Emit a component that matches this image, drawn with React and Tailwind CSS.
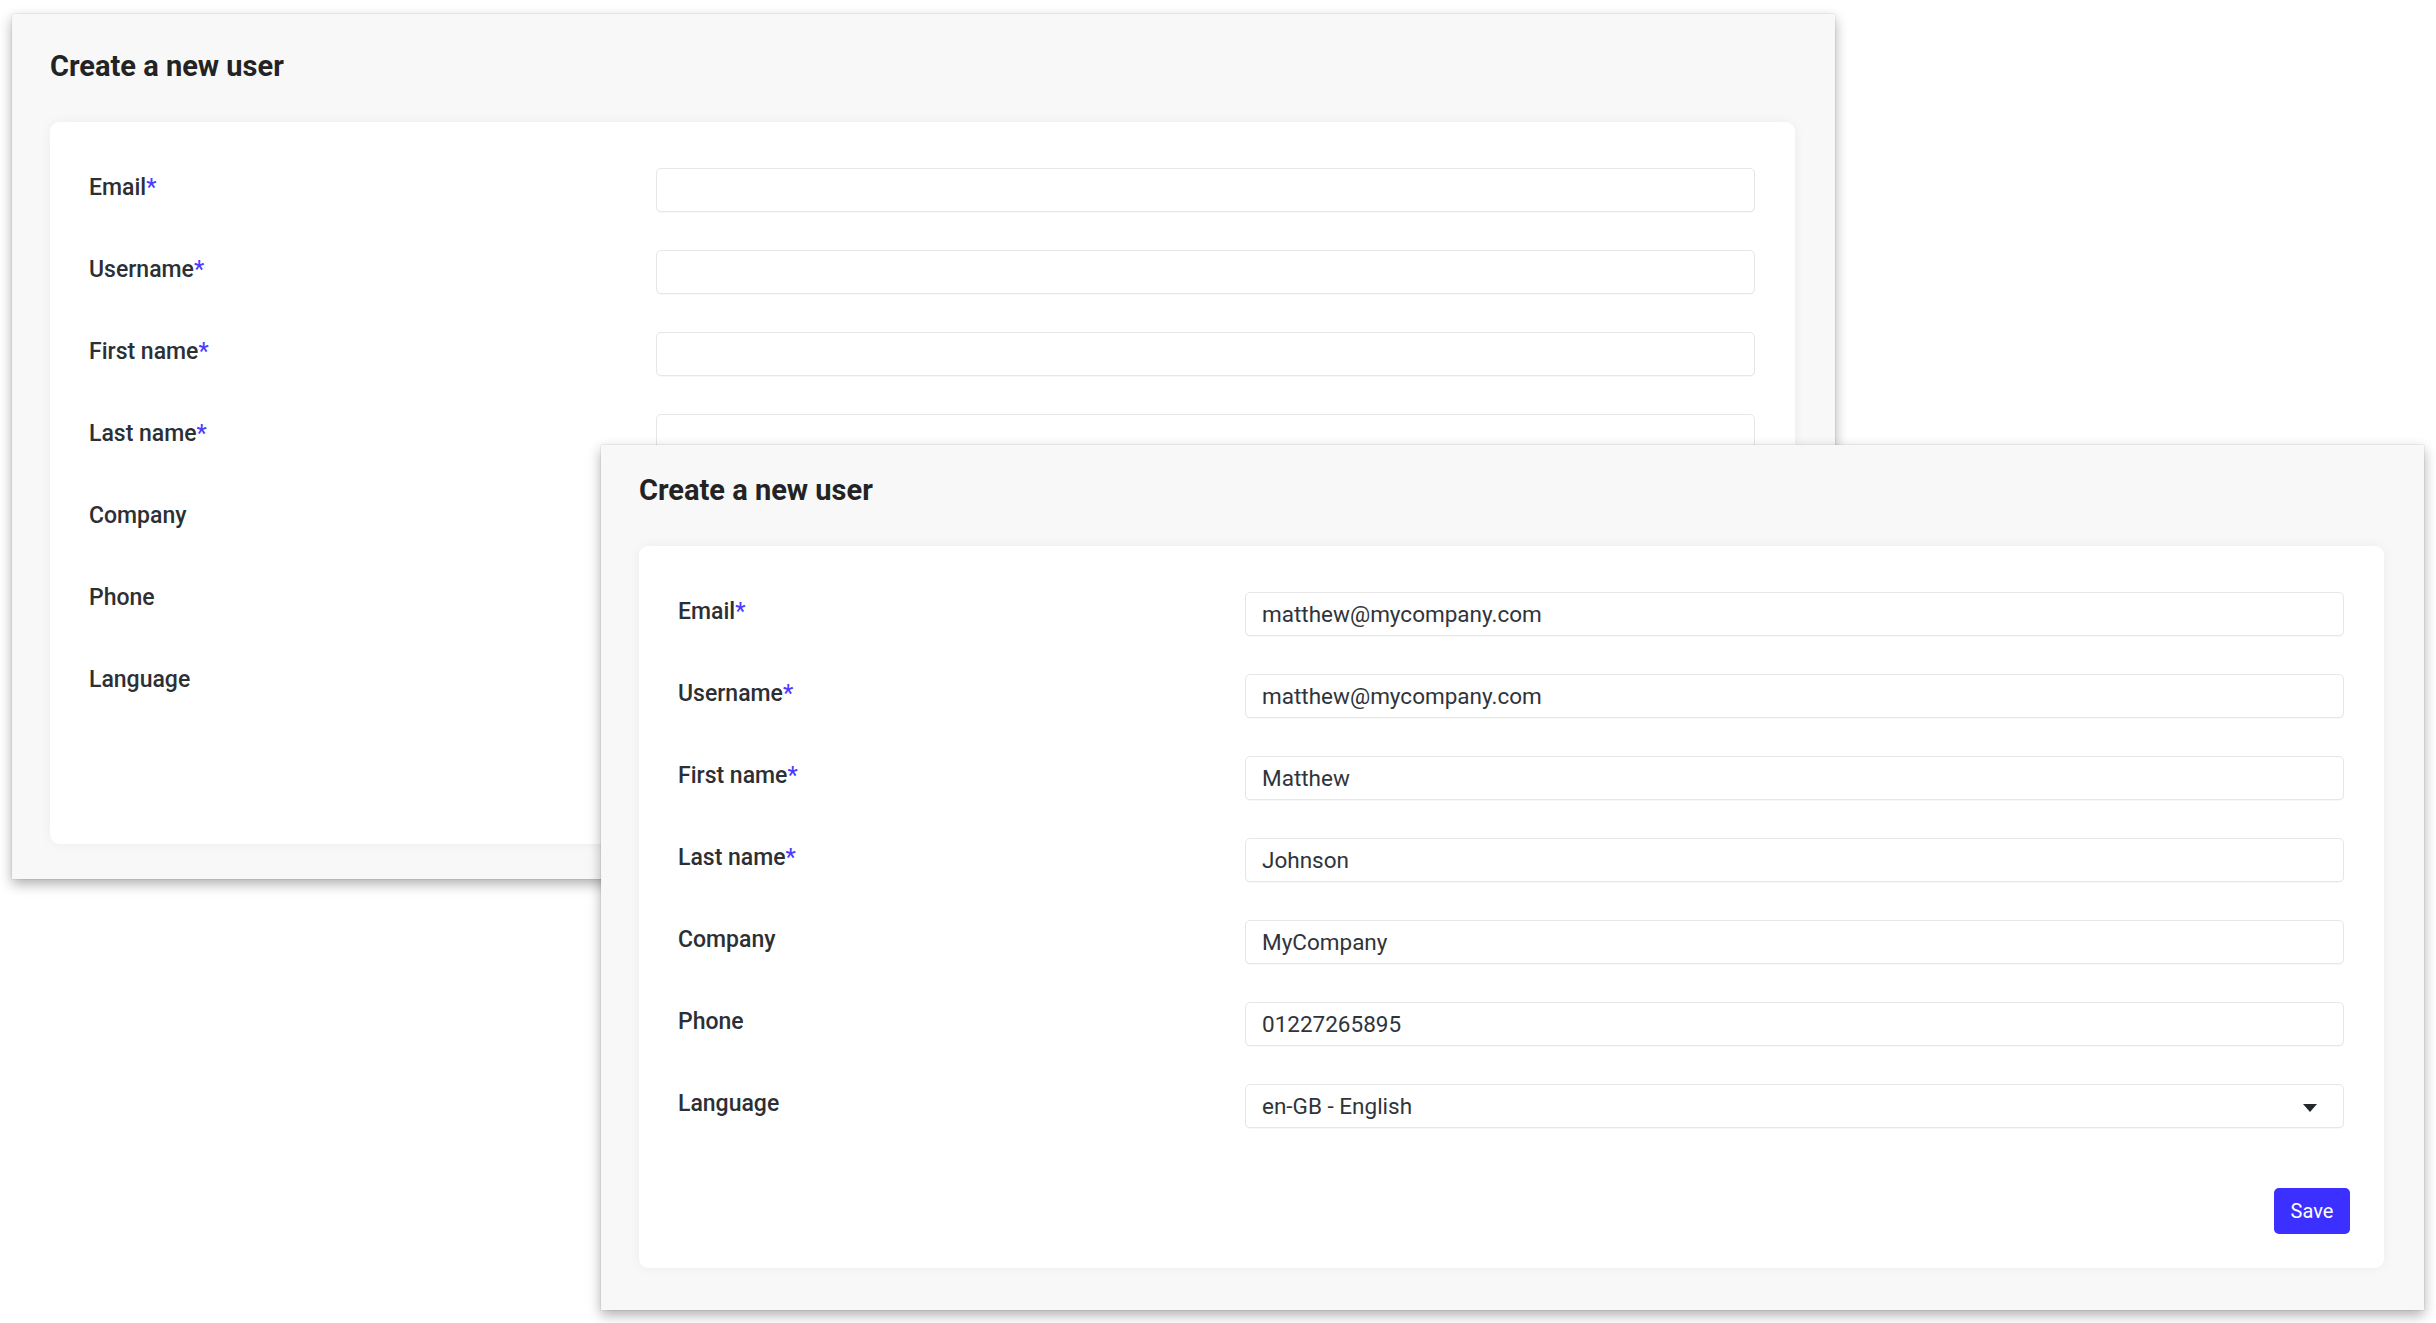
import React from "react";

const fields = [
  { label: "Email", required: true, value: "matthew@mycompany.com" },
  { label: "Username", required: true, value: "matthew@mycompany.com" },
  { label: "First name", required: true, value: "Matthew" },
  { label: "Last name", required: true, value: "Johnson" },
  { label: "Company", required: false, value: "MyCompany" },
  { label: "Phone", required: false, value: "01227265895" },
];

function Row({ label, required, value, select }) {
  return (
    <div className="flex h-[44px] items-center">
      <div className="w-[567px] shrink-0 pb-[4px] text-[23px] leading-[28px] font-medium text-[#2c3035]">
        {label}
        {required && <span className="text-[#4b3cff]">*</span>}
      </div>
      <div className="flex h-[44px] flex-1 items-center justify-between rounded-[5px] border border-[#e6e6e6] bg-white pl-[16px] pr-[26px] shadow-[0_1px_1px_rgba(0,0,0,0.03)]">
        <span className="text-[22.5px] leading-[28px] text-[#30343a]">{value}</span>
        {select && (
          <svg width="14" height="8" viewBox="0 0 14 8" className="mt-[3px]">
            <path d="M0 0 L14 0 L7 8 Z" fill="#23262b" />
          </svg>
        )}
      </div>
    </div>
  );
}

function Window({ filled, back }) {
  return (
    <div
      className={
        "flex h-[865px] w-[1823px] flex-col bg-[#f8f8f8] pl-[38px] pr-[40px] shadow-[0_5px_12px_rgba(0,0,0,0.32),0_0_1px_rgba(0,0,0,0.25)] " +
        (back ? "pt-[35px]" : "pt-[28px]")
      }
    >
      <h1 className="text-[29px] leading-[34px] font-bold text-[#232323]">Create a new user</h1>
      <div className="mt-[39px] flex h-[722px] flex-col rounded-[9px] bg-white pt-[46px] pb-[34px] pl-[39px] pr-[40px] shadow-[0_0_12px_rgba(0,0,0,0.05)]">
        <div className="flex flex-col gap-[38px]">
          {fields.map((f) => (
            <Row key={f.label} label={f.label} required={f.required} value={filled ? f.value : ""} />
          ))}
          <Row label="Language" value={filled ? "en-GB - English" : ""} select={filled} />
        </div>
        {filled && (
          <div className="mt-[60px] -mr-[6px] flex justify-end">
            <button className="h-[46px] w-[76px] rounded-[5px] bg-[#3b30ff] text-[20px] font-normal text-white">
              Save
            </button>
          </div>
        )}
      </div>
    </div>
  );
}

export default function App() {
  return (
    <div className="relative h-[1323px] w-[2436px] overflow-hidden bg-white font-['Roboto','Liberation_Sans',sans-serif]">
      <div className="absolute left-[12px] top-[14px]">
        <Window filled={false} back />
      </div>
      <div className="absolute left-[601px] top-[445px]">
        <Window filled />
      </div>
    </div>
  );
}
